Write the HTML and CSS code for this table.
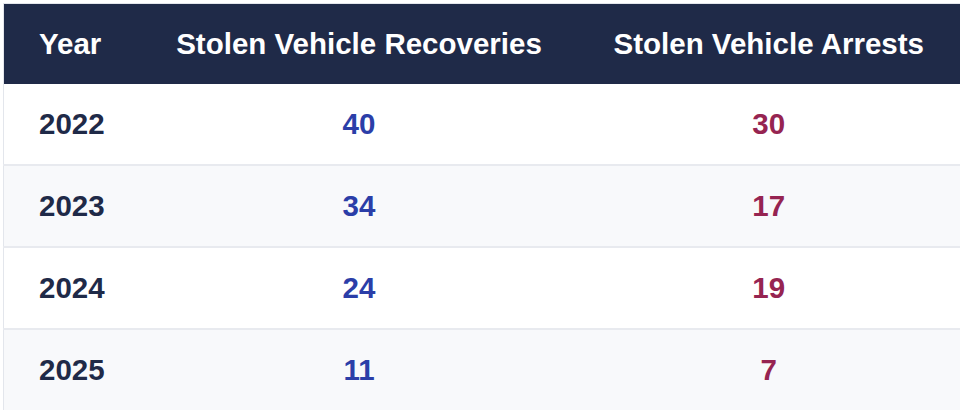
FILE: index.html
```html
<!DOCTYPE html>
<html lang="en">
<head>
<meta charset="utf-8">
<title>Stolen Vehicle Statistics</title>
<link rel="stylesheet" href="styles.css">
</head>
<body>
<div class="wrap">
<table class="stats">
  <colgroup>
    <col class="c-year">
    <col class="c-rec">
    <col class="c-arr">
  </colgroup>
  <thead>
    <tr>
      <th class="year">Year</th>
      <th>Stolen Vehicle Recoveries</th>
      <th>Stolen Vehicle Arrests</th>
    </tr>
  </thead>
  <tbody>
    <tr><td class="year">2022</td><td class="rec">40</td><td class="arr">30</td></tr>
    <tr class="alt"><td class="year">2023</td><td class="rec">34</td><td class="arr">17</td></tr>
    <tr><td class="year">2024</td><td class="rec">24</td><td class="arr">19</td></tr>
    <tr class="alt"><td class="year">2025</td><td class="rec">11</td><td class="arr">7</td></tr>
  </tbody>
</table>
</div>
</body>
</html>
```

FILE: styles.css
```css
html, body {
  margin: 0;
  padding: 0;
  background: #ffffff;
}

.wrap {
  padding: 3px 0 0 3px;
}

.stats {
  border-collapse: collapse;
  table-layout: fixed;
  width: 957px;
  border: 1px solid #e3e6ec;
  font-family: "Liberation Sans", Arial, sans-serif;
  font-weight: 700;
  font-size: 29.5px;
}

.c-year { width: 137px; }
.c-rec { width: 437px; }
.c-arr { width: 383px; }

.stats th {
  background: #1f2a48;
  color: #ffffff;
  height: 80px;
  padding: 0 20px;
  text-align: center;
  white-space: nowrap;
  font-weight: 700;
}

.stats th.year,
.stats td.year {
  text-align: left;
  padding-left: 35px;
}

.stats td {
  height: 80px;
  padding: 0 20px;
  text-align: center;
  border-bottom: 2px solid #e8eaef;
  background: #ffffff;
}

.stats tr.alt td {
  background: #f8f9fb;
}

.stats td.year { color: #1f2a48; }
.stats td.rec { color: #2b3ea8; }
.stats td.arr { color: #962451; }
```
